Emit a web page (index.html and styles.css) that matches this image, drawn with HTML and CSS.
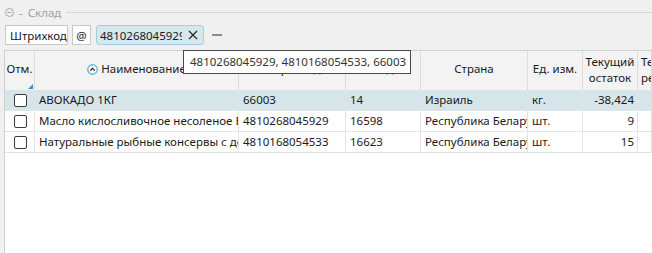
FILE: index.html
```html
<!DOCTYPE html>
<html lang="ru">
<head>
<meta charset="utf-8">
<title>Склад</title>
<link rel="stylesheet" href="styles.css">
</head>
<body>
<div class="panel">
  <div class="group-head">
    <svg class="collapse" width="9" height="9" viewBox="0 0 9 9"><circle cx="4.5" cy="4.5" r="4" fill="none" stroke="#a8a8a8" stroke-width="1"/><line x1="2.3" y1="4.5" x2="6.7" y2="4.5" stroke="#a8a8a8" stroke-width="1"/></svg>
    <span class="gh-dash">-</span>
    <span class="gh-title">Склад</span>
    <span class="gh-line"></span>
  </div>
  <div class="toolbar">
    <button class="tb-btn">Штрихкод</button>
    <button class="tb-btn tb-at">@</button>
    <div class="chip">
      <span class="chip-text">4810268045929</span>
      <svg class="chip-x" width="10" height="10" viewBox="0 0 10 10"><path d="M1 1L9 9M9 1L1 9" stroke="#2b2b2b" stroke-width="1.3" fill="none"/></svg>
    </div>
    <span class="tb-dash"></span>
  </div>
  <div class="grid">
    <div class="row head">
      <div class="cell hc">Отм.<span class="sort-corner"></span></div>
      <div class="cell hc"><svg class="sort-ic" width="11" height="11" viewBox="0 0 11 11"><circle cx="5.5" cy="5.5" r="4.8" fill="none" stroke="#5aaee6" stroke-width="1.2"/><path d="M3.3 6.6L5.5 4.4L7.7 6.6" fill="none" stroke="#2a2a2a" stroke-width="1.2"/></svg>Наименование</div>
      <div class="cell hc">Штрихкод</div>
      <div class="cell hc">Код</div>
      <div class="cell hc">Страна</div>
      <div class="cell hc">Ед. изм.</div>
      <div class="cell hc two">Текущий остаток</div>
      <div class="cell hl two">Текущий резерв</div>
    </div>
    <div class="row sel">
      <div class="cell chk"><span class="box"></span></div>
      <div class="cell">АВОКАДО 1КГ</div>
      <div class="cell">66003</div>
      <div class="cell">14</div>
      <div class="cell">Израиль</div>
      <div class="cell">кг.</div>
      <div class="cell num">-38,424</div>
      <div class="cell"></div>
    </div>
    <div class="row">
      <div class="cell chk"><span class="box"></span></div>
      <div class="cell">Масло кислосливочное несоленое Белорусское 82,5%</div>
      <div class="cell">4810268045929</div>
      <div class="cell">16598</div>
      <div class="cell">Республика Беларусь</div>
      <div class="cell">шт.</div>
      <div class="cell num">9</div>
      <div class="cell"></div>
    </div>
    <div class="row">
      <div class="cell chk"><span class="box"></span></div>
      <div class="cell">Натуральные рыбные консервы с добавлением масла</div>
      <div class="cell">4810168054533</div>
      <div class="cell">16623</div>
      <div class="cell">Республика Беларусь</div>
      <div class="cell">шт.</div>
      <div class="cell num">15</div>
      <div class="cell"></div>
    </div>
  </div>
  <div class="tooltip">4810268045929, 4810168054533, 66003</div>
</div>
</body>
</html>
```

FILE: styles.css
```css
* { box-sizing: border-box; }
html, body { margin: 0; padding: 0; }
body {
  width: 652px;
  height: 253px;
  overflow: hidden;
  background: #f0f0f0;
  font-family: "Noto Sans", "Open Sans", sans-serif;
  font-size: 11.5px;
  color: #1a1a1a;
}
.panel {
  position: relative;
  height: 253px;
  display: flex;
  flex-direction: column;
}
.group-head {
  height: 25px;
  display: flex;
  align-items: flex-start;
  padding: 8px 0 0 5px;
  color: #a0a0a0;
}
.collapse { display: block; }
.gh-dash { margin-left: 5px; line-height: 9px; }
.gh-title { margin-left: 5px; line-height: 9px; }
.gh-line {
  flex: 1;
  height: 1px;
  background: #d6d6d6;
  margin: 4px 0 0 5px;
}
.toolbar {
  height: 20px;
  display: flex;
  align-items: center;
  padding-left: 5px;
}
.tb-btn {
  height: 20px;
  background: #fff;
  border: 1px solid #c9c9c9;
  border-radius: 0;
  font: inherit;
  color: #1a1a1a;
  padding: 0 4px;
  margin: 0 4px 0 0;
  width: 63px;
}
.tb-at { width: 19px; padding: 0; margin-right: 5px; }
.chip {
  height: 20px;
  width: 108px;
  display: flex;
  align-items: center;
  background: #d6e7ee;
  border: 1px solid #a3cfe0;
  border-radius: 3px;
  padding-left: 3px;
}
.chip-text {
  width: 82px;
  overflow: hidden;
  white-space: nowrap;
}
.chip-x { margin-left: 6px; }
.tb-dash {
  width: 10px;
  height: 2px;
  background: #8a8a8a;
  margin-left: 8px;
}
.grid {
  flex: 1;
  margin: 5px 0 0 4px;
  border-left: 1px solid #cfcfcf;
  border-top: 1px solid #cfcfcf;
  background: #fff;
}
.row {
  display: grid;
  grid-template-columns: 30px 204px 107px 75px 107px 55px 55px 1fr;
  height: 21px;
  border-bottom: 1px solid #e3e3e3;
}
.row.head {
  height: 39px;
  background: #f3f3f3;
  border-bottom: none;
}
.row.sel { background: #d5e5ea; }
.cell {
  border-right: 1px solid #e3e3e3;
  overflow: hidden;
  white-space: nowrap;
  padding: 0 4px;
  line-height: 20px;
}
.head .cell {
  border-right-color: #dcdcdc;
  position: relative;
  display: flex;
  align-items: center;
  justify-content: center;
  line-height: 16px;
  padding: 0 0 3px 0;
}
.head .cell.two { white-space: normal; text-align: center; padding: 0 2px 1px 2px; }
.head .cell.hl { justify-content: flex-start; text-align: left; padding-left: 3px; }
.sort-ic { margin-right: 3px; flex: none; }
.sort-corner {
  position: absolute;
  right: 1px;
  bottom: 1px;
  width: 0;
  height: 0;
  border-left: 5px solid transparent;
  border-bottom: 5px solid #3d8fd1;
}
.cell.chk {
  display: flex;
  align-items: center;
  justify-content: center;
  padding: 0 0 0 2px;
}
.box {
  width: 13px;
  height: 13px;
  border: 1px solid #3a3a3a;
  border-radius: 2px;
  background: #fff;
}
.cell.num { text-align: right; padding-right: 3px; }
.tooltip {
  position: absolute;
  left: 183px;
  top: 50px;
  width: 228px;
  height: 24px;
  background: #fff;
  border: 1px solid #4a4a4a;
  color: #333;
  padding-left: 6px;
  line-height: 22px;
  white-space: nowrap;
}
```
